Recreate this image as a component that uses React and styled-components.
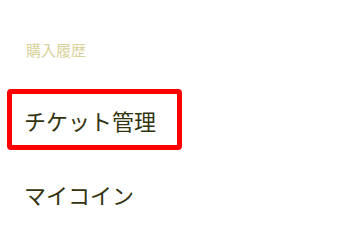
import React from "react";
import styled, { createGlobalStyle } from "styled-components";

const GlobalStyle = createGlobalStyle`
  body {
    margin: 0;
    background: #ffffff;
    font-family: "Noto Sans CJK JP", "Noto Sans", sans-serif;
  }
`;

const Menu = styled.div`
  display: flex;
  flex-direction: column;
  padding: 40px 0 0 7px;
  width: 175px;
`;

const Heading = styled.div`
  font-size: 15px;
  line-height: 20px;
  color: #d8d39c;
  padding-left: 19px;
  margin-bottom: 29px;
`;

const Items = styled.div`
  display: flex;
  flex-direction: column;
  gap: 13px;
`;

const Item = styled.div`
  display: flex;
  align-items: center;
  height: 61px;
  box-sizing: border-box;
  padding: 0 12px;
  border: 5px solid ${(p) => (p.$active ? "#ff0000" : "transparent")};
  border-radius: 4px;
  font-size: 22px;
  color: #33330f;
`;

const items = ["チケット管理", "マイコイン"];

const App = () => {
  return (
    <>
      <GlobalStyle />
      <Menu>
        <Heading>購入履歴</Heading>
        <Items>
          {items.map((label, i) => (
            <Item key={label} $active={i === 0}>
              {label}
            </Item>
          ))}
        </Items>
      </Menu>
    </>
  );
};

export default App;
